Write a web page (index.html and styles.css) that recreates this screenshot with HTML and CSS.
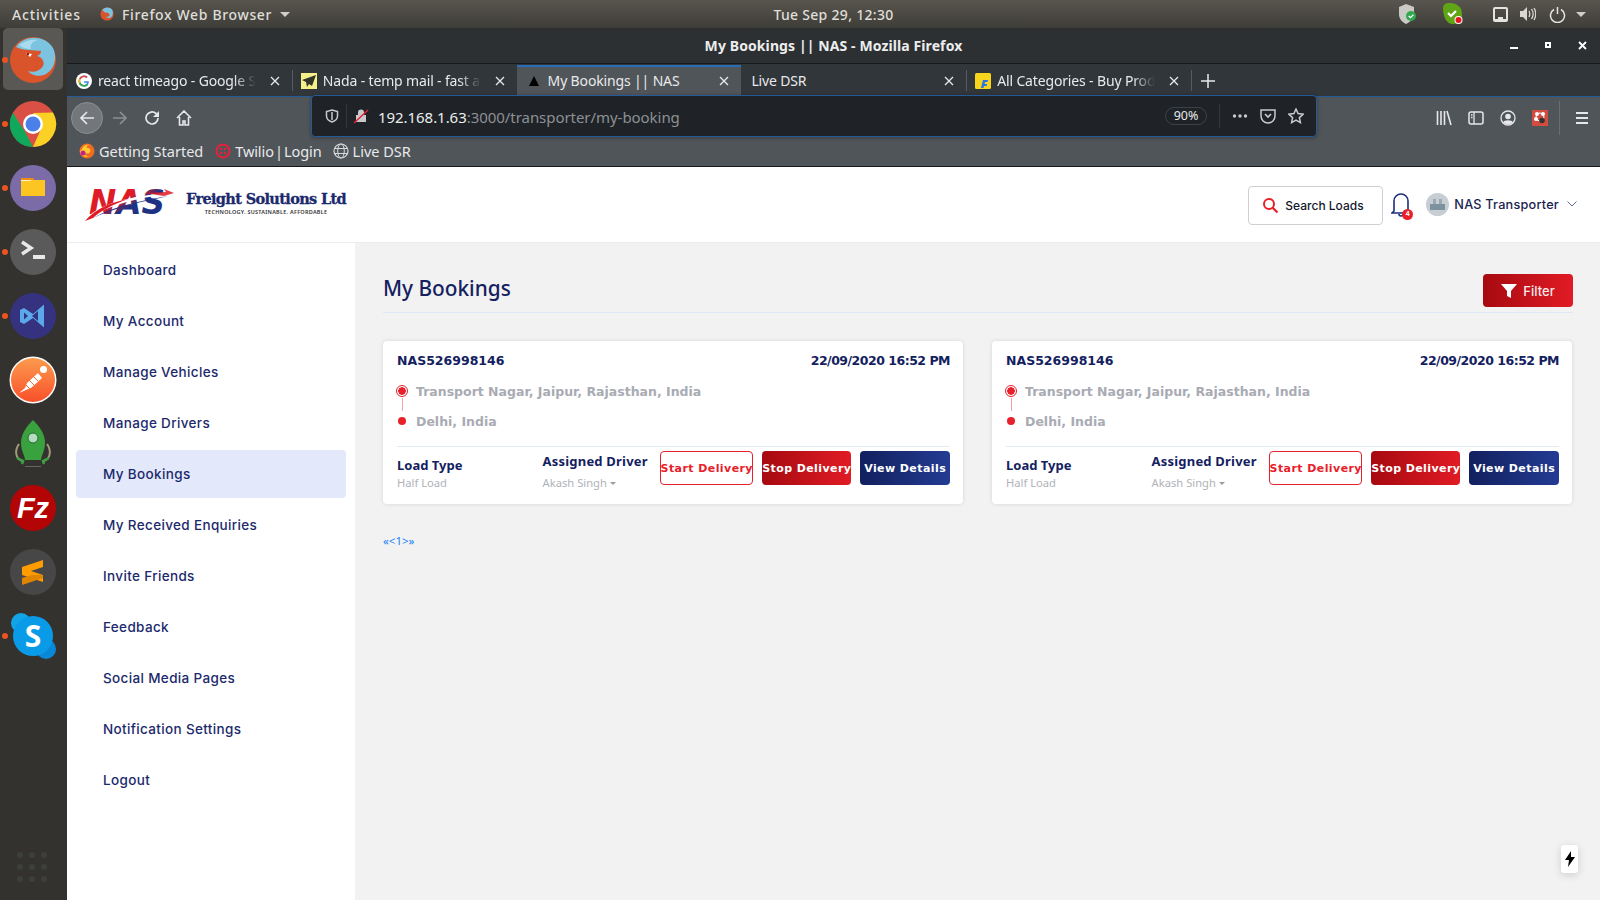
FILE: index.html
```html
<!DOCTYPE html>
<html lang="en">
<head>
    <meta charset="UTF-8">
    <title>My Bookings || NAS</title>
    <link rel="stylesheet" href="styles.css">
</head>
<body>
    <!-- ubuntu top panel -->
    <div class="panel">
        <span class="panel-activities">Activities</span>
        <div class="panel-app">
            <svg class="ico16" viewBox="0 0 16 16"><circle cx="8" cy="8" r="7.500" fill="#d9542b"/><path d="M2.500 3.500C5-.5 11-.5 14 3c1.500 3 1 8-3 9.500-2 .5-3.500-.5-4-1.500 2 .5 4-.5 4-2.500C9.500 6.500 8 6 6 6.500z" fill="#7cc3e0"/></svg>
            <span>Firefox Web Browser</span>
            <i class="caret"></i>
        </div>
        <div class="panel-clock">Tue Sep 29, 12:30</div>
        <div class="panel-tray">
            <svg class="tray-shield" width="22" height="22" viewBox="0 0 22 22"><path d="M9 1l8 3v7c0 5-4 8-8 10-4-2-7-5-7-10V4z" fill="#c9c9c5"/><circle cx="14" cy="13" r="5" fill="#2fa84f"/><path d="M11.700 13l1.700 1.700 3-3" stroke="#fff" stroke-width="1.300" fill="none"/></svg>
            <svg class="tray-green" width="24" height="24" viewBox="0 0 24 24"><path d="M2 6c0-4 3-5 7-5 7 0 12 4 12 11 0 6-3 10-9 10C5 22 2 14 2 6z" fill="#5fa515"/><path d="M7 11l3 3 5-5" stroke="#fff" stroke-width="2.200" fill="none"/><circle cx="17.500" cy="18" r="4" fill="#fff"/><circle cx="17.500" cy="18" r="3" fill="#e8141c"/></svg>
            <svg class="tray-net" width="17" height="17" viewBox="0 0 17 17"><path d="M1 3a2 2 0 012-2h11a2 2 0 012 2v11a2 2 0 01-2 2H3a2 2 0 01-2-2zm2 0v10h3v-2h5v2h3V3z" fill="#e4e3df" fill-rule="evenodd"/></svg>
            <svg class="tray-vol" width="17" height="16" viewBox="0 0 17 16"><path d="M1 5h3l4-4v14l-4-4H1z" fill="#d8d7d3"/><path d="M10 5c1 2 1 4 0 6M12.500 3c2 3 2 7 0 10M15 2c2.400 4 2.400 8 0 12" stroke="#d8d7d3" stroke-width="1.300" fill="none"/></svg>
            <svg class="tray-pow" width="17" height="17" viewBox="0 0 17 17"><path d="M5 3.500a7 7 0 1 0 7 0M8.500 1v7" stroke="#e4e3df" stroke-width="1.500" fill="none"/></svg>
            <i class="caret"></i>
        </div>
    </div>

    <div class="desktop">
        <!-- launcher -->
        <div class="dock">
            <div class="dock-item dock-active"><b class="pip"></b>
                <svg viewBox="0 0 48 48"><circle cx="24" cy="25" r="23" fill="#d9542b"/><path d="M7 12C14 0 36-1 44 13c5 10 1 23-9 27-6 2-13 0-16-4 6 2 12 0 15-5 2-4-1-9-6-10 3-1 4-3 4-5-5 0-8-1-12-1-5 0-9-1-13-3z" fill="#7cc3e0"/><path d="M10 10c6-4 12-6 19-5-5 1-9 5-7 9-4 0-8-1-12-4z" fill="#a8dcee"/><path d="M17 18l6 1-2 3z" fill="#fff"/><circle cx="19" cy="19" r="1.200" fill="#a11"/></svg></div>
            <div class="dock-item"><b class="pip"></b>
                <svg viewBox="0 0 48 48"><circle cx="24" cy="24" r="23" fill="#db5045"/><path d="M24 47A23 23 0 0 1 4 12.500L15 30l9 17z" fill="#10a85a"/><path d="M24 47a23 23 0 0 0 20-34.500L24 13l8 16z" fill="#fbd125"/><path d="M4 12.500L15 30l9-17z" fill="#db5045"/><circle cx="24" cy="24" r="10" fill="#fff"/><circle cx="24" cy="24" r="7.500" fill="#4a80e8"/></svg></div>
            <div class="dock-item"><b class="pip"></b>
                <svg viewBox="0 0 48 48"><circle cx="24" cy="24" r="23" fill="#7b6ca8"/><path d="M12 14h12l2 3h-14z" fill="#f08c12"/><rect x="12" y="16" width="24" height="16" fill="#fdc521"/><rect x="12" y="16" width="10" height=".8" fill="#fff"/></svg></div>
            <div class="dock-item"><b class="pip"></b>
                <svg viewBox="0 0 48 48"><circle cx="24" cy="24" r="23" fill="#5a5a5a"/><path d="M13 14l9 6-9 6" stroke="#e8e8e8" stroke-width="3.500" fill="none"/><rect x="24" y="27" width="12" height="4" fill="#e8e8e8"/></svg></div>
            <div class="dock-item"><b class="pip"></b>
                <svg viewBox="0 0 48 48"><circle cx="24" cy="24" r="23" fill="#35327f"/><path d="M35 12.500L24 22l-9-6-4 2v12l4 2 9-6 11 9.500zM29 19v10l-6-5zM15 20.500l4 3.500-4 3.500z" fill="#5aa9ea" fill-rule="evenodd"/></svg></div>
            <div class="dock-item">
                <svg viewBox="0 0 48 48"><defs><linearGradient id="pm" x1="0" y1="0" x2="0" y2="1"><stop offset="0" stop-color="#fc9b4d"/><stop offset="1" stop-color="#f9502a"/></linearGradient></defs><circle cx="24" cy="24" r="23.500" fill="#fff"/><circle cx="24" cy="24" r="22" fill="url(#pm)"/><path d="M10 37l6-5 2-5 11-10 4 5-11 10-5 2z" fill="#fff"/><path d="M16 28l5 5M20 24l5 5M24 20l5 5" stroke="#f9702e"/><circle cx="34.500" cy="13.500" r="3.500" fill="#fff"/></svg></div>
            <div class="dock-item">
                <svg viewBox="0 0 48 48"><path d="M24 0c8 8 12 15 12 23s-4 13-4 17H16c0-4-4-9-4-17S16 8 24 0z" fill="#3aa13f"/><circle cx="24" cy="18" r="5" fill="#b5dbc0" stroke="#1f6d2c"/><path d="M10 24c-5 7-3 15 3 17M38 24c5 7 3 15-3 17" stroke="#a39a7e" stroke-width="2" fill="none"/><path d="M8 38l6 3-1 3M40 38l-6 3 1 3" stroke="#3aa13f" stroke-width="2.500" fill="none"/><rect x="16" y="46" width="16" height="1" fill="#666"/></svg></div>
            <div class="dock-item">
                <svg viewBox="0 0 48 48"><circle cx="24" cy="24" r="23" fill="#b30505"/><text x="24" y="34" class="fz-text">Fz</text></svg></div>
            <div class="dock-item">
                <svg viewBox="0 0 48 48"><circle cx="24" cy="24" r="23" fill="#474747"/><path d="M34 12v7l-21 7v-7z" fill="#fe9c00"/><path d="M13 20l21 7v7l-21-7z" fill="#fe9c00"/><path d="M34 27v3l-21 7v-7l10-3z" fill="#e08500"/></svg></div>
            <div class="dock-item"><b class="pip"></b>
                <svg viewBox="0 0 48 48"><circle cx="12" cy="11" r="10" fill="#12a5e6"/><circle cx="37" cy="37" r="10" fill="#0a88d8"/><circle cx="24" cy="24" r="20" fill="#0a9be8"/><text x="24" y="35" class="sk-text">S</text></svg></div>
            <div class="dock-grid">
                <i></i><i></i><i></i><i></i><i></i><i></i><i></i><i></i><i></i>
            </div>
        </div>

        <div class="window">
            <div class="titlebar">
                <span class="title-text">My Bookings || NAS - Mozilla Firefox</span>
                <div class="win-ctrls">
                    <svg width="9" height="9" viewBox="0 0 9 9"><rect y="6" width="8" height="2" fill="#fff"/></svg>
                    <svg width="9" height="9" viewBox="0 0 9 9"><path d="M1 1h6v6H1zM3 3v2h2V3z" fill="#fff" fill-rule="evenodd"/></svg>
                    <svg width="9" height="9" viewBox="0 0 9 9"><path d="M1 1l7 7M8 1L1 8" stroke="#fff" stroke-width="1.800"/></svg>
                </div>
            </div>

            <div class="tabs">
                <div class="tab">
                    <svg class="ico16" viewBox="0 0 16 16"><circle cx="8" cy="8" r="8" fill="#fff"/><path d="M12.800 8.200H8v1.600h3c-.4 1.300-1.500 2.100-3 2.100a3.900 3.900 0 0 1 0-7.800c1 0 1.800.4 2.400 1l1.200-1.200A5.500 5.500 0 1 0 8 13.500c3.200 0 5-2.300 4.800-5.300z" fill="#4285f4"/><path d="M3.100 5.500L4.500 6.600A3.900 3.900 0 0 1 8 4.100c1 0 1.800.4 2.400 1l1.200-1.200A5.500 5.500 0 0 0 3.100 5.500z" fill="#ea4335"/><path d="M2.900 10.400l1.500-1.100a3.900 3.900 0 0 0 6.300 1.600l1.300 1a5.500 5.500 0 0 1-9.100-1.500z" fill="#34a853"/><path d="M2.900 10.400a5.500 5.500 0 0 1 .2-4.900l1.400 1.100a3.900 3.900 0 0 0-.1 2.700z" fill="#fbbc05"/></svg>
                    <span class="tab-label tab-fade">react timeago - Google S</span>
                    <svg class="tab-x" viewBox="0 0 10 10"><path d="M1 1l8 8M9 1L1 9" stroke="#e8e9ea" stroke-width="1.300"/></svg>
                </div>
                <div class="tab tab-sep">
                    <svg class="ico16" viewBox="0 0 16 16"><rect width="16" height="16" fill="#f6f08a"/><path d="M15 2L1 7l4 2 1 5 2-3 3 2z" fill="#33352b"/></svg>
                    <span class="tab-label tab-fade">Nada - temp mail - fast ar</span>
                    <svg class="tab-x" viewBox="0 0 10 10"><path d="M1 1l8 8M9 1L1 9" stroke="#e8e9ea" stroke-width="1.300"/></svg>
                </div>
                <div class="tab tab-active">
                    <svg class="ico16" viewBox="0 0 16 16"><path d="M8 3l5 10H3z" fill="#000"/></svg>
                    <span class="tab-label">My Bookings || NAS</span>
                    <svg class="tab-x" viewBox="0 0 10 10"><path d="M1 1l8 8M9 1L1 9" stroke="#e8e9ea" stroke-width="1.300"/></svg>
                </div>
                <div class="tab tab-plain">
                    <span class="tab-label">Live DSR</span>
                    <svg class="tab-x" viewBox="0 0 10 10"><path d="M1 1l8 8M9 1L1 9" stroke="#e8e9ea" stroke-width="1.300"/></svg>
                </div>
                <div class="tab tab-sep">
                    <svg class="ico16" viewBox="0 0 16 16"><rect width="16" height="16" rx="1.500" fill="#f7d51d"/><path d="M6 15l2-8h5l-.5 2H10l-.4 2h2.500l-.5 2H9l-.5 2z" fill="#2874f0"/></svg>
                    <span class="tab-label tab-fade">All Categories - Buy Prod</span>
                    <svg class="tab-x" viewBox="0 0 10 10"><path d="M1 1l8 8M9 1L1 9" stroke="#e8e9ea" stroke-width="1.300"/></svg>
                </div>
                <div class="tab-new">
                    <svg width="14" height="14" viewBox="0 0 14 14"><path d="M7 0v14M0 7h14" stroke="#e8e9ea" stroke-width="1.500"/></svg>
                </div>
            </div>

            <div class="navbar">
                <div class="nav-left">
                    <div class="nav-back"><svg width="16" height="16" viewBox="0 0 16 16"><path d="M15 8H2M8 2L2 8l6 6" stroke="#e6e7e8" stroke-width="1.700" fill="none"/></svg></div>
                    <svg class="nav-ico nav-dim" viewBox="0 0 16 16"><path d="M1 8h13M8 2l6 6-6 6" stroke="#8b8f92" stroke-width="1.700" fill="none"/></svg>
                    <svg class="nav-ico" viewBox="0 0 16 16"><path d="M14 8a6 6 0 1 1-2-4.500L14 5.500" stroke="#e6e7e8" stroke-width="1.700" fill="none"/><path d="M15 1v6H9z" fill="#e6e7e8"/></svg>
                    <svg class="nav-ico" viewBox="0 0 16 16"><path d="M1 8l7-7 7 7M3.500 7v8h3.500v-4h2v4h3.500V7" stroke="#e6e7e8" stroke-width="1.600" fill="none"/></svg>
                </div>
                <div class="urlbar">
                    <svg class="url-shield" width="14" height="14" viewBox="0 0 14 14"><path d="M7 1l5.500 1.500V7c0 3-2.500 5-5.500 6C4 12 1.500 10 1.500 7V2.500zM7 3v8" stroke="#c8c9ca" stroke-width="1.500" fill="none"/></svg>
                    <i class="url-sep"></i>
                    <svg class="url-lock" width="16" height="16" viewBox="0 0 16 16"><path d="M5 7V4.500a3 3 0 0 1 6 0V7h2v7H3V7z" fill="#c8c9ca"/><path d="M1 15L15 2" stroke="#e8203a" stroke-width="1.500"/></svg>
                    <span class="url-text"><b>192.168.1.63</b>:3000/transporter/my-booking</span>
                    <span class="url-zoom">90%</span>
                    <i class="url-sep url-sep-r"></i>
                    <svg class="url-act" viewBox="0 0 16 16"><circle cx="2.500" cy="8" r="1.700" fill="#c8c9ca"/><circle cx="8" cy="8" r="1.700" fill="#c8c9ca"/><circle cx="13.500" cy="8" r="1.700" fill="#c8c9ca"/></svg>
                    <svg class="url-act" viewBox="0 0 16 16"><path d="M1 2h14v6a7 7 0 0 1-14 0z" stroke="#c8c9ca" stroke-width="1.500" fill="none"/><path d="M5 6l3 3 3-3" stroke="#c8c9ca" stroke-width="1.700" fill="none"/></svg>
                    <svg class="url-act" viewBox="0 0 16 16"><path d="M8 1l2.100 4.600 5 .6-3.700 3.400 1 5L8 12.100 3.600 14.600l1-5L.9 6.200l5-.6z" stroke="#c8c9ca" stroke-width="1.500" fill="none"/></svg>
                </div>
                <div class="nav-right">
                    <svg class="nav-ico" viewBox="0 0 16 16"><path d="M1.500 1v14M5 1v14M8.500 1v14M11 1l4 14" stroke="#e6e7e8" stroke-width="1.600"/></svg>
                    <svg class="nav-ico" viewBox="0 0 16 16"><rect x="1" y="2" width="14" height="12" rx="2" stroke="#e6e7e8" stroke-width="1.500" fill="none"/><path d="M6 2v12M3 5h1.500M3 7.500h1.500" stroke="#e6e7e8" stroke-width="1.300"/></svg>
                    <svg class="nav-ico" viewBox="0 0 16 16"><circle cx="8" cy="8" r="7" stroke="#e6e7e8" stroke-width="1.300" fill="none"/><circle cx="8" cy="6.500" r="2.800" fill="#e6e7e8"/><path d="M3 12.500c1-3 9-3 10 0-2 2-8 2-10 0z" fill="#e6e7e8"/></svg>
                    <svg class="nav-ico" viewBox="0 0 16 16"><rect width="16" height="16" fill="#d24c3f"/><circle cx="8" cy="7" r="4" stroke="#fff" fill="none"/><circle cx="5" cy="4" r="2" fill="#fff"/><circle cx="11" cy="4" r="2" fill="#fff"/><circle cx="4" cy="9" r="2" fill="#fff"/><circle cx="10" cy="10.500" r="2.800" fill="#333"/></svg>
                    <i class="nav-sep"></i>
                    <svg class="nav-ico" viewBox="0 0 16 16"><path d="M2 3h12M2 8h12M2 13h12" stroke="#e6e7e8" stroke-width="1.800"/></svg>
                </div>
            </div>

            <div class="bookmarks">
                <div class="bm">
                    <svg class="ico16" viewBox="0 0 16 16"><circle cx="8" cy="8" r="7.500" fill="#f26b21"/><path d="M3 6c1-3 4-5 8-4-3 0-4 2-3 3 3 0 4 2 3 4-1 2-5 2-6 0 0 3 3 5 6 4-4 2-9 0-10-4 0-1 1-2 2-3z" fill="#ffcb2f"/><circle cx="4" cy="10" r="2.500" fill="#c6218e"/></svg>
                    <span>Getting Started</span>
                </div>
                <div class="bm">
                    <svg class="ico16" viewBox="0 0 16 16"><circle cx="8" cy="8" r="6.500" stroke="#e8203a" stroke-width="2" fill="none"/><circle cx="6" cy="6" r="1.200" fill="#e8203a"/><circle cx="10" cy="6" r="1.200" fill="#e8203a"/><circle cx="6" cy="10" r="1.200" fill="#e8203a"/><circle cx="10" cy="10" r="1.200" fill="#e8203a"/></svg>
                    <span class="bm-tight">Twilio | Login</span>
                </div>
                <div class="bm">
                    <svg class="ico16" viewBox="0 0 16 16"><circle cx="8" cy="8" r="7" stroke="#d8d9da" stroke-width="1.200" fill="none"/><ellipse cx="8" cy="8" rx="3.300" ry="7" stroke="#d8d9da" fill="none"/><path d="M1.500 5.500h13M1.500 10.500h13" stroke="#d8d9da"/></svg>
                    <span>Live DSR</span>
                </div>
            </div>

            <!-- the page itself -->
            <div class="page">
                <header class="site-header">
                    <div class="logo">
                        <svg class="logo-mark" width="92" height="44" viewBox="0 0 92 44">
                            <defs><linearGradient id="nas" x1="0" y1="0" x2="1" y2="1"><stop offset=".45" stop-color="#dd1c28"/><stop offset=".58" stop-color="#1e3183"/></linearGradient></defs>
                            <text x="5" y="33" textLength="76" lengthAdjust="spacingAndGlyphs" class="logo-nas">NAS</text>
                            <g transform="translate(0 3)">
                                <path d="M1 36C14 20 46 12 84 9l-3-4 11 4-9 4 2-3C50 14 24 22 7 33z" fill="#fff"/>
                                <path d="M1 37C12 24 26 19 44 15 28 21 16 27 9 34z" fill="#e11b25"/>
                                <path d="M9 34C26 24 50 18 84 12L76 14C50 19 26 26 9 34z" fill="#1e3183"/>
                                <path d="M60 9l22-1-2-3 10 4-10 3z" fill="#e11b25" opacity=".85"/>
                            </g>
                        </svg>
                        <div class="logo-words">
                            <div class="logo-name">Freight Solutions Ltd</div>
                            <div class="logo-tag">TECHNOLOGY. SUSTAINABLE. AFFORDABLE</div>
                        </div>
                    </div>
                    <div class="head-right">
                        <div class="search-btn">
                            <svg width="17" height="17" viewBox="0 0 17 17"><circle cx="7" cy="7" r="5" stroke="#e8202a" stroke-width="2" fill="none"/><path d="M10.500 10.500l5 5" stroke="#e8202a" stroke-width="2.200"/></svg>
                            <span>Search Loads</span>
                        </div>
                        <div class="bell">
                            <svg width="20" height="28" viewBox="0 0 20 28"><path d="M3 20V10a7 7 0 0 1 14 0v10l2 2H1zM8 23a2 2 0 0 0 4 0" stroke="#1d2f7a" stroke-width="1.600" fill="none"/></svg>
                            <span class="bell-count">4</span>
                        </div>
                        <div class="user">
                            <svg class="avatar" width="23" height="23" viewBox="0 0 23 23"><circle cx="11.500" cy="11.500" r="11.500" fill="#c6ced4"/><rect x="4" y="11" width="15" height="6" fill="#7e919e"/><rect x="7" y="6" width="3" height="5" fill="#9aa9b3"/><rect x="13" y="6" width="3" height="5" fill="#9aa9b3"/></svg>
                            <span>NAS Transporter</span>
                            <svg width="10" height="6" viewBox="0 0 10 6"><path d="M.5.500L5 5 9.500.5" stroke="#5e668c" fill="none"/></svg>
                        </div>
                    </div>
                </header>

                <div class="page-body">
                    <nav class="sidebar">
                        <a class="side-link">Dashboard</a>
                        <a class="side-link">My Account</a>
                        <a class="side-link">Manage Vehicles</a>
                        <a class="side-link">Manage Drivers</a>
                        <a class="side-link active">My Bookings</a>
                        <a class="side-link">My Received Enquiries</a>
                        <a class="side-link">Invite Friends</a>
                        <a class="side-link">Feedback</a>
                        <a class="side-link">Social Media Pages</a>
                        <a class="side-link">Notification Settings</a>
                        <a class="side-link">Logout</a>
                    </nav>

                    <main class="content">
                        <div class="content-head">
                            <h1>My Bookings</h1>
                            <button class="btn-filter">
                                <svg width="16" height="16" viewBox="0 0 16 16"><path d="M0 1h16l-6 7v7l-4-2V8z" fill="#fff"/></svg>
                                Filter
                            </button>
                        </div>

                        <div class="cards">
                            <div class="card">
                                <div class="card-top">
                                    <span>NAS526998146</span>
                                    <span class="card-date">22/09/2020 16:52 PM</span>
                                </div>
                                <div class="route">
                                    <div class="stop"><i class="dot-from"></i>Transport Nagar, Jaipur, Rajasthan, India</div>
                                    <div class="stop stop-to"><i class="dot-to"></i>Delhi, India</div>
                                </div>
                                <div class="card-foot">
                                    <div class="col-load">
                                        <div class="foot-label">Load Type</div>
                                        <div class="foot-val">Half Load</div>
                                    </div>
                                    <div class="col-driver">
                                        <div class="foot-label">Assigned Driver</div>
                                        <div class="foot-val">Akash Singh <i class="mini-caret"></i></div>
                                    </div>
                                    <button class="btn btn-start">Start Delivery</button>
                                    <button class="btn btn-stop">Stop Delivery</button>
                                    <button class="btn btn-view">View Details</button>
                                </div>
                            </div>
                            <div class="card">
                                <div class="card-top">
                                    <span>NAS526998146</span>
                                    <span class="card-date">22/09/2020 16:52 PM</span>
                                </div>
                                <div class="route">
                                    <div class="stop"><i class="dot-from"></i>Transport Nagar, Jaipur, Rajasthan, India</div>
                                    <div class="stop stop-to"><i class="dot-to"></i>Delhi, India</div>
                                </div>
                                <div class="card-foot">
                                    <div class="col-load">
                                        <div class="foot-label">Load Type</div>
                                        <div class="foot-val">Half Load</div>
                                    </div>
                                    <div class="col-driver">
                                        <div class="foot-label">Assigned Driver</div>
                                        <div class="foot-val">Akash Singh <i class="mini-caret"></i></div>
                                    </div>
                                    <button class="btn btn-start">Start Delivery</button>
                                    <button class="btn btn-stop">Stop Delivery</button>
                                    <button class="btn btn-view">View Details</button>
                                </div>
                            </div>
                        </div>

                        <div class="pager">«&lt;1&gt;»</div>
                    </main>
                </div>

                <div class="bolt">
                    <svg width="12" height="16" viewBox="0 0 12 16"><path d="M7 0L1 9h4l-1 7 7-10H7z" fill="#000"/></svg>
                </div>
            </div>
        </div>
    </div>
</body>
</html>
```

FILE: styles.css
```css
* {
    box-sizing: border-box;
}
html, body {
    margin: 0;
    height: 900px;
    overflow: hidden;
}
body {
    font-family: "Noto Sans", sans-serif;
    display: flex;
    flex-direction: column;
    background: #33322e;
}
svg {
    display: block;
    flex: none;
}
.ico16 {
    width: 16px;
    height: 16px;
}

/* top panel */
.panel {
    height: 28px;
    flex: none;
    background: linear-gradient(#58554e, #3f3d38);
    color: #dfded9;
    font-size: 14px;
    font-weight: 500;
    letter-spacing: 0.65px;
    display: flex;
    align-items: center;
    padding-left: 12px;
    position: relative;
}
.panel-activities {
    width: 88px;
    letter-spacing: 0.85px;
}
.panel-app {
    display: flex;
    align-items: center;
    gap: 8px;
}
.panel-app .ico16 {
    width: 14px;
    height: 14px;
}
.caret {
    width: 0;
    height: 0;
    border-left: 5px solid transparent;
    border-right: 5px solid transparent;
    border-top: 5px solid #cfcec9;
    display: block;
}
.panel-clock {
    position: absolute;
    left: 0;
    right: 0;
    margin-left: 67px;
    text-align: center;
    letter-spacing: 0.3px;
}
.panel-tray {
    margin-left: auto;
    display: flex;
    align-items: center;
    padding-right: 14px;
    position: relative;
}
.tray-green {
    margin-left: 22px;
}
.tray-net {
    margin-left: 27px;
}
.tray-vol {
    margin-left: 10px;
}
.tray-pow {
    margin-left: 13px;
}
.panel-tray .caret {
    margin-left: 10px;
}

.desktop {
    flex: 1;
    display: flex;
    min-height: 0;
}

/* launcher */
.dock {
    width: 67px;
    flex: none;
    background: #33322e;
    display: flex;
    flex-direction: column;
    align-items: center;
    position: relative;
}
.dock-item {
    width: 60px;
    height: 64px;
    display: flex;
    align-items: center;
    justify-content: center;
    position: relative;
    right: 1px;
}
.dock-item svg {
    width: 48px;
    height: 48px;
}
.dock-active {
    background: #5a5854;
    border-radius: 5px;
    height: 62px;
    margin-bottom: 2px;
}
.pip {
    position: absolute;
    left: -1px;
    top: 29px;
    width: 6px;
    height: 6px;
    border-radius: 50%;
    background: #e95420;
}
.fz-text {
    font: italic bold 29px "Liberation Sans", sans-serif;
    fill: #fff;
    text-anchor: middle;
}
.sk-text {
    font: bold 30px "Noto Sans", sans-serif;
    fill: #fff;
    text-anchor: middle;
}
.dock-grid {
    position: absolute;
    left: 17px;
    bottom: 18px;
    display: grid;
    grid-template-columns: repeat(3, 6px);
    gap: 6px;
}
.dock-grid i {
    width: 6px;
    height: 6px;
    border-radius: 50%;
    background: #3d3f3e;
}

/* firefox chrome */
.window {
    flex: 1;
    min-width: 0;
    display: flex;
    flex-direction: column;
}
.titlebar {
    height: 36px;
    flex: none;
    background: #2c3033;
    border-bottom: 1px solid #17191b;
    display: flex;
    align-items: center;
    justify-content: center;
    position: relative;
}
.title-text {
    color: #eceded;
    font-size: 14px;
    font-weight: 700;
    letter-spacing: 0.1px;
}
.win-ctrls {
    position: absolute;
    right: 13px;
    top: 13px;
    display: flex;
    gap: 25px;
}
.tabs {
    height: 33px;
    flex: none;
    background: #31363a;
    display: flex;
    padding-top: 1px;
    border-bottom: 1px solid #255a98;
}
.tab {
    width: 224.8px;
    flex: none;
    display: flex;
    align-items: center;
    color: #e8e9ea;
    font-size: 14px;
    letter-spacing: -0.15px;
    padding: 0 12px 0 9px;
    position: relative;
}
.tab-sep::before {
    content: "";
    position: absolute;
    left: 0;
    top: 5px;
    bottom: 5px;
    width: 1px;
    background: #585c60;
}
.tab .ico16 {
    margin: 0 6px 0 0;
}
.tab-active {
    background: #50555a;
    border-top: 2px solid #2a6cb6;
    padding-bottom: 2px;
}
.tab-plain {
    padding-left: 10px;
}
.tab-label {
    flex: 1;
    min-width: 0;
    white-space: nowrap;
}
.tab-fade {
    -webkit-mask-image: linear-gradient(to left, transparent 8px, #000 30px);
    mask-image: linear-gradient(to left, transparent 8px, #000 30px);
}
.tab-x {
    width: 10px;
    height: 10px;
    flex: none;
    margin-left: 6px;
}
.tab-new {
    width: 34px;
    border-left: 1px solid #585c60;
    margin: 5px 0;
    display: flex;
    align-items: center;
    justify-content: center;
}
.navbar {
    height: 41px;
    flex: none;
    background: #50555a;
    display: flex;
    align-items: center;
    position: relative;
}
.nav-left {
    width: 244px;
    flex: none;
    display: flex;
    align-items: center;
    padding-left: 4px;
}
.nav-back {
    width: 32px;
    height: 32px;
    border-radius: 50%;
    background: #73777b;
    border: 1px solid #8b8e91;
    display: flex;
    align-items: center;
    justify-content: center;
}
.nav-ico {
    width: 16px;
    height: 16px;
}
.nav-left .nav-ico {
    margin-left: 16px;
}
.nav-left .nav-dim {
    margin-left: 9px;
}
.urlbar {
    width: 1006px;
    height: 42px;
    margin-top: -3px;
    background: #1f2327;
    border: 1px solid #255a98;
    border-radius: 4px;
    display: flex;
    align-items: center;
    padding-left: 13px;
    color: #8d9094;
    font-size: 15px;
    letter-spacing: -0.05px;
    box-shadow: 0 1px 4px rgba(0, 0, 0, 0.3);
    z-index: 1;
}
.url-sep {
    width: 1px;
    height: 24px;
    background: #33383c;
    margin: 0 6px 0 7px;
}
.url-text {
    margin-left: 9px;
    flex: 1;
    padding-top: 1px;
}
.url-text b {
    font-weight: 400;
    color: #eceded;
}
.url-zoom {
    width: 42px;
    height: 18px;
    border: 1px solid #3d4246;
    border-radius: 9px;
    color: #e6e7e8;
    font-size: 12.5px;
    text-align: center;
    line-height: 16px;
}
.url-sep-r {
    margin: 0 12px 0 12px;
}
.url-act {
    width: 16px;
    height: 16px;
    margin-right: 12px;
}
.nav-right {
    flex: 1;
    display: flex;
    align-items: center;
    padding-left: 119px;
    gap: 16px;
}
.nav-sep {
    width: 1px;
    height: 34px;
    background: #6a6e72;
    margin: 0 -2px 0 -5px;
}
.bookmarks {
    height: 29px;
    flex: none;
    background: #50555a;
    border-bottom: 1px solid #17191b;
    display: flex;
    align-items: center;
    padding: 0 0 2px 12px;
    gap: 12px;
    color: #e8e9ea;
    font-size: 14.5px;
}
.bm {
    display: flex;
    align-items: center;
    gap: 4px;
}
.bm-tight {
    word-spacing: -2.5px;
    letter-spacing: -0.1px;
}
.bm:last-child {
    margin-left: -1px;
}

/* site */
.page {
    flex: 1;
    min-height: 0;
    background: #fff;
    display: flex;
    flex-direction: column;
    position: relative;
}
.site-header {
    height: 76px;
    flex: none;
    border-bottom: 1px solid #ececec;
    display: flex;
    align-items: center;
    justify-content: space-between;
    padding: 0 23px 0 17px;
}
.logo {
    display: flex;
    align-items: center;
    gap: 10px;
    margin-top: -3px;
}
.logo-nas {
    font: italic 700 34px "DejaVu Sans", sans-serif;
    fill: url(#nas);
}
.logo-name {
    font: 700 14.5px "DejaVu Serif", serif;
    color: #1b2a6c;
    letter-spacing: -0.65px;
    white-space: nowrap;
    -webkit-text-stroke: 0.3px #1b2a6c;
}
.logo-tag {
    font: 600 5.5px "Noto Sans", sans-serif;
    color: #333;
    letter-spacing: 0.25px;
    text-align: center;
    margin-top: 1px;
}
.head-right {
    display: flex;
    align-items: center;
}
.search-btn {
    width: 135px;
    height: 39px;
    border: 1px solid #cfcfcf;
    border-radius: 4px;
    display: flex;
    align-items: center;
    gap: 6px;
    padding-left: 13px;
    color: #14182e;
    font: 500 12px "Inter", sans-serif;
    margin-top: 1px;
}
.bell {
    position: relative;
    margin-left: 8px;
}
.bell-count {
    position: absolute;
    right: -2px;
    bottom: -1px;
    width: 11px;
    height: 11px;
    border-radius: 50%;
    background: #e8202a;
    color: #fff;
    font: 700 6.5px/11px "Inter", sans-serif;
    text-align: center;
}
.user {
    display: flex;
    align-items: center;
    margin-left: 15px;
    gap: 5px;
    color: #1a2251;
    font: 500 12.7px "Inter", sans-serif;
    letter-spacing: 0.22px;
    margin-top: -1px;
}
.user svg:last-child {
    margin-left: 3px;
}
.page-body {
    flex: 1;
    min-height: 0;
    display: flex;
}
.sidebar {
    width: 288px;
    flex: none;
    padding: 3px 9px 0;
    display: flex;
    flex-direction: column;
    gap: 3px;
}
.side-link {
    height: 48px;
    flex: none;
    border-radius: 4px;
    padding-left: 27px;
    display: flex;
    align-items: center;
    color: #1c2a6c;
    font: 500 13.5px "Inter", sans-serif;
    letter-spacing: 0.35px;
}
.side-link.active {
    background: #e3e9fb;
}
.content {
    flex: 1;
    background: #f2f2f2;
    padding: 0 27px 0 28px;
}
.content-head {
    height: 70px;
    margin-bottom: 28px;
    padding-top: 31px;
    border-bottom: 1px solid #dfe6f5;
    display: flex;
    align-items: flex-start;
    justify-content: space-between;
}
h1 {
    margin: 0;
    color: #13215f;
    font-size: 20.8px;
    font-weight: 500;
    line-height: 28px;
}
.btn-filter {
    width: 90px;
    height: 33px;
    border: 0;
    border-radius: 4px;
    background: linear-gradient(to right, #a60a10, #e11b25);
    color: #f5e9e9;
    font: 500 13px "Inter", sans-serif;
    display: flex;
    align-items: center;
    justify-content: center;
    gap: 6px;
}
.cards {
    display: grid;
    grid-template-columns: 580px 580px;
    gap: 29px;
}
.card {
    height: 163px;
    background: #fff;
    border-radius: 4px;
    box-shadow: 0 0 4px rgba(0, 0, 0, 0.12);
    padding: 11px 13px 0 14px;
    font-family: "DejaVu Sans", sans-serif;
}
.card-top {
    display: flex;
    justify-content: space-between;
    color: #13215f;
    font-size: 12.5px;
    font-weight: 700;
    line-height: 18px;
}
.card-date {
    letter-spacing: -0.5px;
}
.route {
    margin-top: 6px;
    height: 71px;
    border-bottom: 1px solid #e3e9f5;
}
.stop {
    height: 30px;
    display: flex;
    align-items: center;
    color: #a9abb3;
    font-size: 12.5px;
    font-weight: 700;
    position: relative;
    padding-left: 19px;
}
.dot-from {
    position: absolute;
    left: -1px;
    top: 9px;
    width: 12px;
    height: 12px;
    border: 1px solid #e8202a;
    border-radius: 50%;
    background: radial-gradient(#e8202a 0 3.5px, #fff 4px);
}
.dot-from::after {
    content: "";
    position: absolute;
    left: 5px;
    top: 12px;
    width: 1px;
    height: 13px;
    background: #f5a3a6;
}
.dot-to {
    position: absolute;
    left: 1px;
    top: 11px;
    width: 8px;
    height: 8px;
    border-radius: 50%;
    background: #e8202a;
}
.card-foot {
    display: flex;
    align-items: flex-start;
    padding-top: 4px;
}
.col-load {
    width: 146px;
    padding-top: 5px;
}
.col-driver {
    width: 118px;
    padding-top: 1px;
}
.foot-label {
    color: #13215f;
    font-family: "Noto Sans", sans-serif;
    font-size: 13px;
    font-weight: 700;
    line-height: 18px;
    white-space: nowrap;
}
.col-driver .foot-label {
    letter-spacing: 0.2px;
}
.foot-val {
    color: #b0b2b8;
    font-family: "Noto Sans", sans-serif;
    font-size: 11.2px;
    line-height: 14px;
    margin-top: 2px;
}
.col-driver .foot-val {
    margin-top: 6px;
}
.mini-caret {
    display: inline-block;
    width: 0;
    height: 0;
    border-left: 3px solid transparent;
    border-right: 3px solid transparent;
    border-top: 3px solid #9a9ca3;
    vertical-align: 2px;
}
.btn {
    height: 34px;
    padding: 0;
    border-radius: 4px;
    font: 700 11px "DejaVu Sans", sans-serif;
    letter-spacing: 0.42px;
    white-space: nowrap;
    display: flex;
    align-items: center;
    justify-content: center;
}
.btn-start {
    width: 93px;
    background: #fff;
    border: 1px solid #e8202a;
    color: #e8202a;
}
.btn-stop {
    width: 89px;
    margin-left: 9px;
    border: 0;
    background: linear-gradient(to right, #a60a10, #e11b25);
    color: #fff;
}
.btn-view {
    width: 90px;
    margin-left: 9px;
    border: 0;
    background: linear-gradient(to right, #12205e, #233b93);
    color: #fff;
}
.pager {
    margin-top: 29px;
    color: #1a7fff;
    font: 400 11.5px "Noto Sans", sans-serif;
}
.bolt {
    position: absolute;
    right: 22px;
    bottom: 27px;
    width: 17px;
    height: 28px;
    border-radius: 3px;
    background: #fff;
    box-shadow: 0 2px 8px rgba(0, 0, 0, 0.15);
    display: flex;
    align-items: center;
    justify-content: center;
}
```
